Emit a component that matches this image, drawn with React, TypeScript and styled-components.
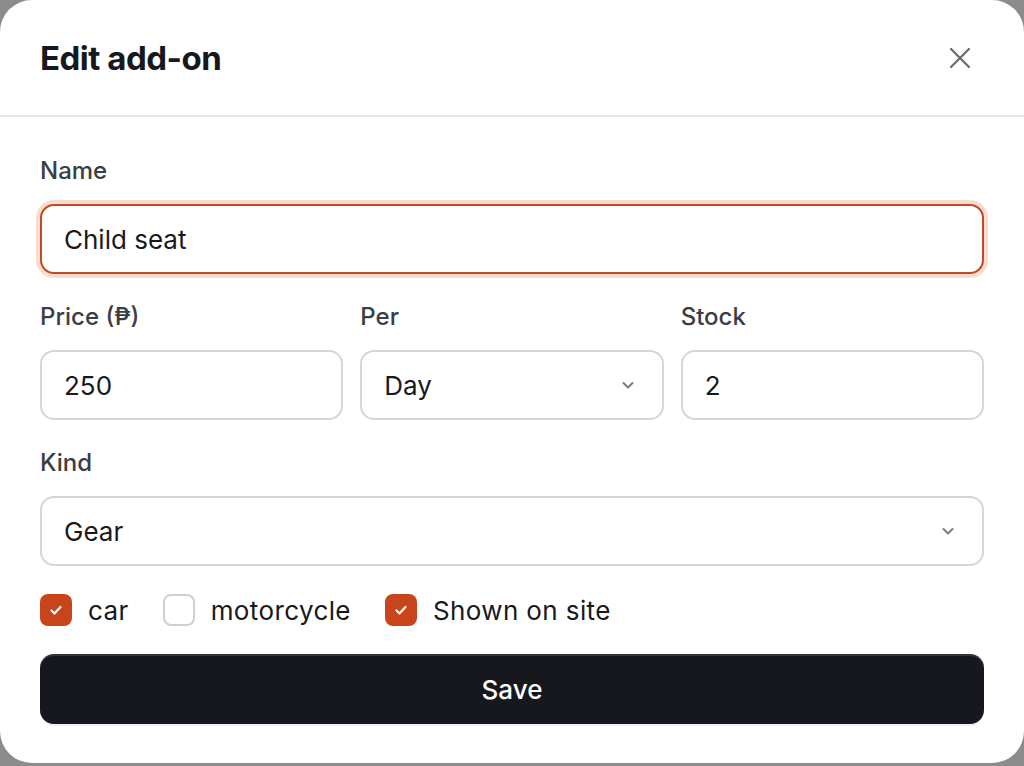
import * as React from 'react';
import styled, { createGlobalStyle } from 'styled-components';

const GlobalStyle = createGlobalStyle`
  html, body {
    margin: 0;
    padding: 0;
    background: #8c8c8c;
  }
  * {
    box-sizing: border-box;
  }
  body {
    font-family: Inter, "Noto Sans", "Liberation Sans", sans-serif;
    -webkit-font-smoothing: antialiased;
  }
`;

const Dialog = styled.div`
  width: 1024px;
  height: 763px;
  background: #ffffff;
  border-radius: 32px;
  display: flex;
  flex-direction: column;
  overflow: hidden;
`;

const Header = styled.div`
  height: 117px;
  padding: 0 40px;
  display: flex;
  align-items: center;
  justify-content: space-between;
  border-bottom: 2px solid #e6e7e8;
`;

const Title = styled.h2`
  margin: 0;
  font-size: 33px;
  font-weight: 700;
  letter-spacing: -0.015em;
  color: #16181d;
`;

const CloseButton = styled.button`
  width: 40px;
  height: 40px;
  margin-right: 4px;
  border: 0;
  background: transparent;
  padding: 0;
  display: flex;
  align-items: center;
  justify-content: center;
  color: #6b6b6e;
  cursor: pointer;
`;

const Body = styled.form`
  padding: 39px 40px 0;
  display: flex;
  flex-direction: column;
  gap: 28px;
`;

const Row = styled.div`
  display: grid;
  grid-template-columns: repeat(3, 1fr);
  gap: 17px;
`;

const Field = styled.label`
  display: flex;
  flex-direction: column;
  gap: 18px;
`;

const Label = styled.span`
  font-size: 24px;
  line-height: 30px;
  font-weight: 450;
  color: #3c3d42;
`;

const Input = styled.input<{ $focused?: boolean }>`
  height: 70px;
  width: 100%;
  padding: 0 22px;
  border-radius: 14px;
  border: 2px solid ${(p) => (p.$focused ? '#c34a22' : '#d6d6d8')};
  box-shadow: ${(p) => (p.$focused ? '0 0 0 4px #f7dccf' : 'none')};
  font-family: inherit;
  font-size: 26px;
  color: #18191d;
  background: #fff;
  outline: none;
`;

const SelectBox = styled.div`
  height: 70px;
  padding: 0 27px 0 22px;
  border-radius: 14px;
  border: 2px solid #d6d6d8;
  display: flex;
  align-items: center;
  justify-content: space-between;
  font-size: 26px;
  color: #18191d;
`;

const Chevron = styled.span`
  display: flex;
  color: #7a7b80;
`;

const Checks = styled.div`
  display: flex;
  align-items: center;
  gap: 34px;
  height: 32px;
`;

const CheckItem = styled.label`
  display: flex;
  align-items: center;
  gap: 16px;
  font-size: 26px;
  letter-spacing: 0.015em;
  color: #18191d;
`;

const Box = styled.span<{ $checked?: boolean }>`
  width: 32px;
  height: 32px;
  border-radius: 8px;
  display: flex;
  align-items: center;
  justify-content: center;
  background: ${(p) => (p.$checked ? '#c8451c' : '#fff')};
  border: ${(p) => (p.$checked ? '0' : '2px solid #cfcfd1')};
  color: #fff;
`;

const SaveButton = styled.button`
  height: 70px;
  width: 100%;
  border: 0;
  border-radius: 14px;
  background: #16181d;
  box-shadow: inset 0 2px 0 rgba(255, 255, 255, 0.12), 0 2px 0 #eef0f3;
  color: #ffffff;
  font-family: inherit;
  font-size: 26px;
  font-weight: 500;
  cursor: pointer;
`;

function CloseIcon() {
  return (
    <svg width="22" height="22" viewBox="0 0 22 22" fill="none">
      <path d="M2 2L20 20M20 2L2 20" stroke="currentColor" strokeWidth="2.2" strokeLinecap="round" />
    </svg>
  );
}

function ChevronIcon() {
  return (
    <svg width="14" height="14" viewBox="0 0 14 14" fill="none">
      <path d="M2.5 5L7 9.5L11.5 5" stroke="currentColor" strokeWidth="2" strokeLinecap="round" strokeLinejoin="round" />
    </svg>
  );
}

function CheckIcon() {
  return (
    <svg width="16" height="16" viewBox="0 0 16 16" fill="none">
      <path d="M3.5 8.5L6.5 11.5L12.5 5" stroke="currentColor" strokeWidth="2.2" strokeLinecap="round" strokeLinejoin="round" />
    </svg>
  );
}

const checks = [
  { label: 'car', checked: true },
  { label: 'motorcycle', checked: false },
  { label: 'Shown on site', checked: true },
];

export default function App() {
  return (
    <>
      <GlobalStyle />
      <Dialog>
        <Header>
          <Title>Edit add-on</Title>
          <CloseButton type="button" aria-label="Close">
            <CloseIcon />
          </CloseButton>
        </Header>
        <Body onSubmit={(e) => e.preventDefault()}>
          <Field>
            <Label>Name</Label>
            <Input $focused defaultValue="Child seat" />
          </Field>
          <Row>
            <Field>
              <Label>Price (₱)</Label>
              <Input defaultValue="250" />
            </Field>
            <Field>
              <Label>Per</Label>
              <SelectBox>
                Day
                <Chevron>
                  <ChevronIcon />
                </Chevron>
              </SelectBox>
            </Field>
            <Field>
              <Label>Stock</Label>
              <Input defaultValue="2" />
            </Field>
          </Row>
          <Field>
            <Label>Kind</Label>
            <SelectBox>
              Gear
              <Chevron>
                <ChevronIcon />
              </Chevron>
            </SelectBox>
          </Field>
          <Checks>
            {checks.map((c) => (
              <CheckItem key={c.label}>
                <Box $checked={c.checked}>{c.checked && <CheckIcon />}</Box>
                {c.label}
              </CheckItem>
            ))}
          </Checks>
          <SaveButton type="submit">Save</SaveButton>
        </Body>
      </Dialog>
    </>
  );
}
